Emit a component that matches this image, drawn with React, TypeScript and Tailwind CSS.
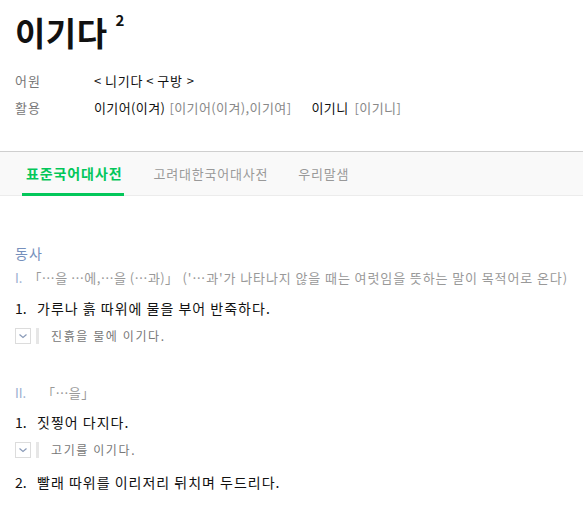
import React from 'react';

const font = { fontFamily: '"Noto Sans CJK KR", "Noto Sans", sans-serif' };

const ExampleToggle: React.FC<{ text: string }> = ({ text }) => (
  <div className="flex items-center h-[18px] mt-[9px]">
    <span className="w-4 h-4 border border-[#dcdcdc] bg-white flex items-center justify-center">
      <svg width="10" height="6" viewBox="0 0 10 6" fill="none" stroke="#8a9bb8" strokeWidth="1.2">
        <path d="M1.5 1.5 L5 4.5 L8.5 1.5" />
      </svg>
    </span>
    <span className="w-[3px] h-4 bg-[#e6e6e6] ml-[5px]" />
    <span className="ml-3 text-[12px] tracking-[1.6px] text-[#777]">{text}</span>
  </div>
);

const Sense: React.FC<{ no: number; text: string }> = ({ no, text }) => (
  <div className="flex text-[14px] text-[#111] leading-5">
    <span className="w-[22px]">{no}.</span>
    <span className="tracking-[1px]">{text}</span>
  </div>
);

export default function App() {
  return (
    <div className="w-[583px] h-[521px] bg-white overflow-hidden" style={font}>
      <div className="px-[15px] pt-[9px]">
        <h1 className="flex items-start text-[33px] font-bold text-[#111] leading-[46px] tracking-[0.5px]">
          이기다
          <sup className="text-[15px] ml-[8px] mt-[1px] leading-5 top-0">2</sup>
        </h1>
        <div className="mt-[16px] text-[13px] leading-5">
          <div className="flex">
            <span className="w-[79px] text-[#777] tracking-[1px]">어원</span>
            <span className="flex text-[#111] tracking-[0.8px]">
              <span className="mr-[3px]">&lt;</span>
              <span>니기다</span>
              <span className="mx-[3px]">&lt;</span>
              <span>구방</span>
              <span className="ml-[4px]">&gt;</span>
            </span>
          </div>
          <div className="flex mt-[7px] tracking-[0.4px]">
            <span className="w-[79px] text-[#777] tracking-[1px]">활용</span>
            <span className="text-[#111]">이기어(이겨)</span>
            <span className="ml-1 text-[#888]">[이기어(이겨),이기여]</span>
            <span className="ml-[20px] text-[#111]">이기니</span>
            <span className="ml-[6px] text-[#888]">[이기니]</span>
          </div>
        </div>
      </div>

      <div className="mt-[33px] border-t border-[#cfcfcf] border-b border-b-[#ececec] bg-[#f9f9f9] h-[45px] flex px-[22px]">
        <div className="relative flex items-center h-full pl-1 pr-[2px]">
          <span className="text-[14px] font-bold text-[#03c75a] tracking-[0.9px]">표준국어대사전</span>
          <span className="absolute left-0 right-0 bottom-[-1px] h-[3px] bg-[#03c75a]" />
        </div>
        <div className="flex items-center h-full ml-[29px] text-[13px] tracking-[0.8px] text-[#999]">고려대한국어대사전</div>
        <div className="flex items-center h-full ml-[30px] text-[13px] tracking-[0.8px] text-[#999]">우리말샘</div>
      </div>

      <div className="px-[15px] pt-[47px]">
        <div className="text-[14px] text-[#7690bc] leading-5 tracking-[1px]">동사</div>
        <div className="flex text-[13px] leading-5 mt-[5px] whitespace-nowrap">
          <span className="w-[22px] text-[#9aaed0]">I.</span>
          <span className="text-[#999] tracking-[0.4px] -ml-[3px]">「…을 …에,…을 (…과)」</span>
          <span className="ml-[4px] text-[#999] tracking-[0.9px]">('…과'가 나타나지 않을 때는 여럿임을 뜻하는 말이 목적어로 온다)</span>
        </div>
        <div className="mt-[10px]">
          <Sense no={1} text="가루나 흙 따위에 물을 부어 반죽하다." />
          <ExampleToggle text="진흙을 물에 이기다." />
        </div>

        <div className="flex text-[13px] leading-5 mt-[38px]">
          <span className="w-[31px] text-[#9aaed0]">II.</span>
          <span className="text-[#999] tracking-[0.4px] -ml-[4px]">「…을」</span>
        </div>
        <div className="mt-[9px]">
          <Sense no={1} text="짓찧어 다지다." />
          <ExampleToggle text="고기를 이기다." />
        </div>
        <div className="mt-[13px]">
          <Sense no={2} text="빨래 따위를 이리저리 뒤치며 두드리다." />
        </div>
      </div>
    </div>
  );
}
